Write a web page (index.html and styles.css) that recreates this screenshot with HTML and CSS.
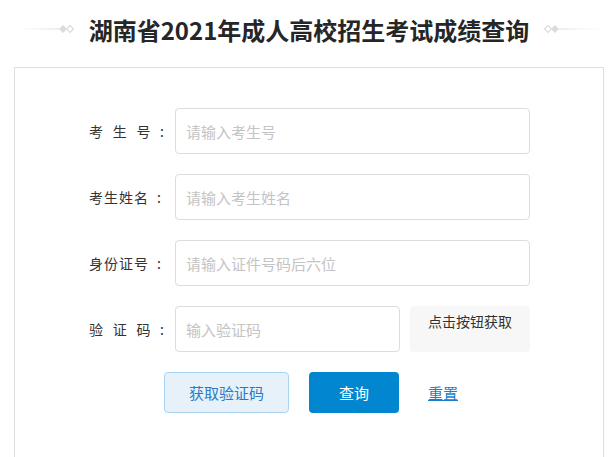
FILE: index.html
```html
<!DOCTYPE html>
<html lang="zh-CN">
<head>
<meta charset="utf-8">
<title>湖南省2021年成人高校招生考试成绩查询</title>
<link rel="stylesheet" href="styles.css">
</head>
<body>
<div class="header">
  <svg class="deco" width="60" height="14" viewBox="0 0 60 14">
    <defs>
      <linearGradient id="gl" x1="0" x2="1" y1="0" y2="0">
        <stop offset="0" stop-color="#e6e6e6" stop-opacity="0"/>
        <stop offset="1" stop-color="#dcdcdc"/>
      </linearGradient>
    </defs>
    <rect x="0" y="6.5" width="44" height="1" fill="url(#gl)"/>
    <path d="M48 3 L52 7 L48 11 L44 7 Z" fill="#dcdcdc"/>
    <path d="M55 3.5 L58.5 7 L55 10.5 L51.5 7 Z" fill="#fff" stroke="#dcdcdc" stroke-width="1.2"/>
  </svg>
  <h1 class="title">湖南省2021年成人高校招生考试成绩查询</h1>
  <svg class="deco" width="60" height="14" viewBox="0 0 60 14">
    <defs>
      <linearGradient id="gr" x1="0" x2="1" y1="0" y2="0">
        <stop offset="0" stop-color="#dcdcdc"/>
        <stop offset="1" stop-color="#e6e6e6" stop-opacity="0"/>
      </linearGradient>
    </defs>
    <path d="M5 3.5 L8.5 7 L5 10.5 L1.5 7 Z" fill="#fff" stroke="#dcdcdc" stroke-width="1.2"/>
    <path d="M12 3 L16 7 L12 11 L8 7 Z" fill="#dcdcdc"/>
    <rect x="16" y="6.5" width="44" height="1" fill="url(#gr)"/>
  </svg>
</div>

<div class="card">
  <div class="row">
    <div class="label"><span>考</span><span>生</span><span>号</span><span>:</span></div>
    <input class="field" type="text" placeholder="请输入考生号">
  </div>
  <div class="row">
    <div class="label tight"><span>考</span><span>生</span><span>姓</span><span>名</span><span class="colon">:</span></div>
    <input class="field" type="text" placeholder="请输入考生姓名">
  </div>
  <div class="row">
    <div class="label tight"><span>身</span><span>份</span><span>证</span><span>号</span><span class="colon">:</span></div>
    <input class="field" type="text" placeholder="请输入证件号码后六位">
  </div>
  <div class="row">
    <div class="label"><span>验</span><span>证</span><span>码</span><span>:</span></div>
    <input class="field short" type="text" placeholder="输入验证码">
    <div class="code-box">点击按钮获取</div>
  </div>
  <div class="actions">
    <button class="btn btn-light" type="button">获取验证码</button>
    <button class="btn btn-primary" type="button">查询</button>
    <a class="reset" href="#">重置</a>
  </div>
</div>
</body>
</html>
```

FILE: styles.css
```css
* { box-sizing: border-box; }

body {
  margin: 0;
  background: #fff;
  font-family: "Noto Sans CJK SC", "Noto Sans", "Liberation Sans", sans-serif;
  color: #333;
}

.header {
  margin-left: 14px;
  width: 590px;
  height: 60px;
  display: flex;
  align-items: center;
  justify-content: center;
  gap: 14px;
}

.deco {
  display: block;
  flex-shrink: 0;
  margin-top: -2px;
}

.title {
  margin: 0;
  font-size: 24px;
  font-weight: 700;
  color: #262626;
  line-height: 30px;
  white-space: nowrap;
  flex-shrink: 0;
}

.card {
  margin: 7px 0 0 14px;
  width: 590px;
  height: 420px;
  border: 1px solid #dedede;
  padding: 40px 0 0 74px;
}

.row {
  display: flex;
  align-items: center;
  height: 46px;
  margin-bottom: 20px;
}

.label {
  width: 75px;
  margin-right: 11px;
  display: flex;
  justify-content: space-between;
  font-size: 14px;
  color: #333;
}

.label.tight {
  justify-content: flex-start;
  gap: 1px;
}

.label.tight .colon {
  margin-left: 8px;
}

.field {
  width: 355px;
  height: 46px;
  border: 1px solid #dcdcdc;
  border-radius: 4px;
  padding: 0 10px;
  font-family: inherit;
  font-size: 15px;
  color: #333;
  outline: none;
}

.field::placeholder {
  color: #c4c4c4;
}

.field.short {
  width: 225px;
}

.code-box {
  width: 120px;
  height: 46px;
  margin-left: 10px;
  background: #f7f7f7;
  border-radius: 4px;
  text-align: center;
  font-size: 14px;
  line-height: 30px;
  color: #333;
}

.actions {
  display: flex;
  align-items: center;
  padding-left: 75px;
}

.btn {
  height: 41px;
  border-radius: 4px;
  font-family: inherit;
  font-size: 15px;
  cursor: pointer;
}

.btn-light {
  width: 125px;
  background: #e7f1fa;
  border: 1px solid #a9d3f1;
  color: #2b7bc4;
}

.btn-primary {
  width: 90px;
  margin-left: 20px;
  background: #0386d0;
  border: none;
  color: #fff;
}

.reset {
  margin-left: 29px;
  font-size: 15px;
  color: #1a7fc8;
  text-decoration: underline;
}
```
